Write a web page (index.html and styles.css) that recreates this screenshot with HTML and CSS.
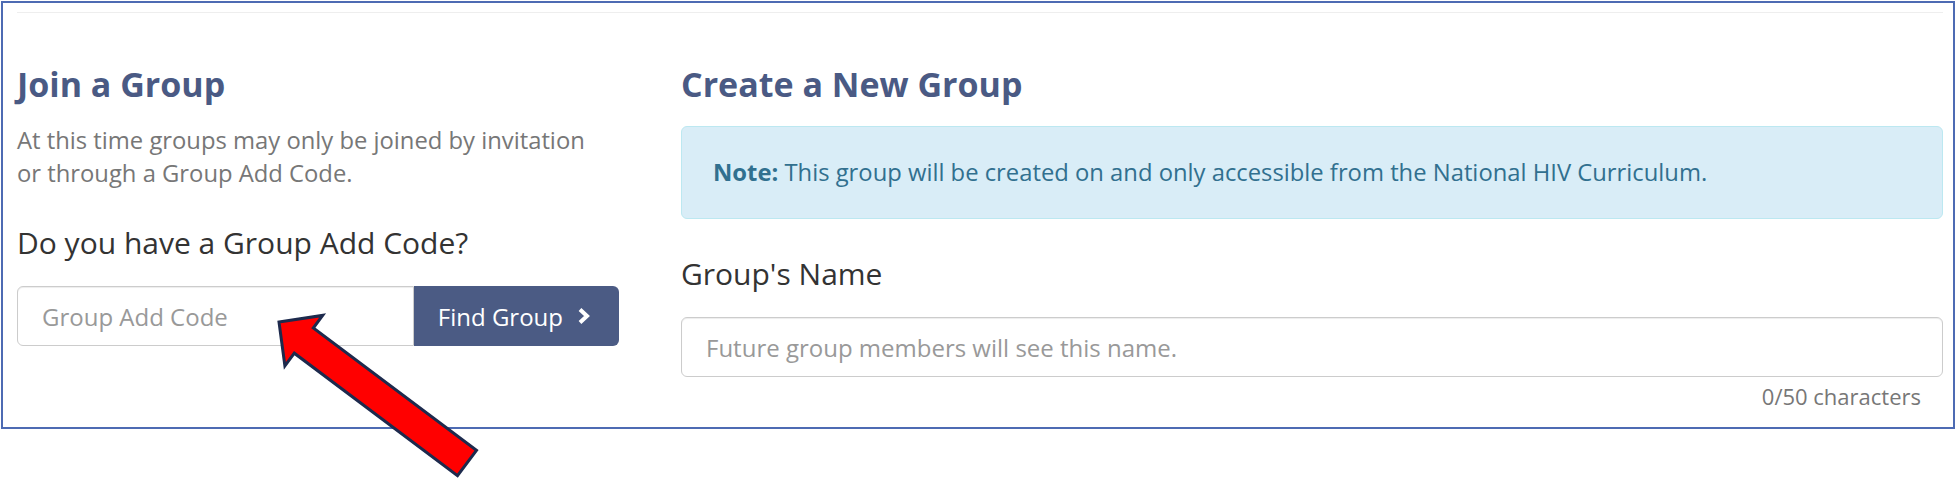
FILE: index.html
```html
<!DOCTYPE html>
<html lang="en">
<head>
    <meta charset="UTF-8">
    <meta name="viewport" content="width=device-width, initial-scale=1.0">
    <title>Groups</title>
    <link rel="stylesheet" href="styles.css">
</head>
<body>
    <div class="frame">
        <div class="row">
            <section class="join">
                <h2 class="title">Join a Group</h2>
                <p class="lead">At this time groups may only be joined by invitation or through a Group Add Code.</p>
                <label class="field-label" for="addCode">Do you have a Group Add Code?</label>
                <div class="input-group">
                    <input type="text" id="addCode" class="text-input" placeholder="Group Add Code">
                    <button type="button" class="find-btn">Find Group
                        <svg class="chevron" viewBox="0 0 14 18" width="14" height="18"><path d="M3 2.5 L10 9 L3 15.5" fill="none" stroke="#fff" stroke-width="4"/></svg>
                    </button>
                </div>
            </section>
            <section class="create">
                <h2 class="title">Create a New Group</h2>
                <div class="alert"><strong>Note:</strong> This group will be created on and only accessible from the National HIV Curriculum.</div>
                <label class="field-label" for="groupName">Group's Name</label>
                <input type="text" id="groupName" class="text-input wide" placeholder="Future group members will see this name.">
                <div class="counter">0/50 characters</div>
            </section>
        </div>
    </div>

    <svg class="arrow" viewBox="0 0 215 173" width="215" height="173">
        <polygon points="9,17 52.7,10.4 43.3,23 206.5,145.4 187.5,170.6 24.3,48.2 14.9,60.8" fill="#ff0000" stroke="#1d2a4d" stroke-width="3" stroke-linejoin="miter"/>
    </svg>
</body>
</html>
```

FILE: styles.css
```css
body {
    margin: 0;
    font-family: "Open Sans", "Liberation Sans", sans-serif;
    background: #fff;
    color: #333;
    position: relative;
    height: 478px;
    overflow: hidden;
}
.frame {
    margin: 1px 3px 0 1px;
    border: 2px solid #4d6bb3;
    padding: 0 10px 14px 14px;
}
.row {
    display: grid;
    grid-template-columns: 602px 1fr;
    column-gap: 62px;
    margin-top: 9px;
    border-top: 1px solid #eee;
}
.title {
    margin: 51px 0 0;
    font-size: 34px;
    line-height: 40px;
    font-weight: 700;
    color: #4a5a84;
}
.lead {
    margin: 20px 0 0;
    max-width: 585px;
    font-size: 23.8px;
    line-height: 33px;
    color: #777;
}
.field-label {
    display: block;
    margin-top: 35px;
    font-size: 30px;
    line-height: 36px;
    color: #333;
}
.create .field-label {
    margin-top: 37px;
}
.input-group {
    display: flex;
    margin-top: 25px;
    height: 60px;
}
.text-input {
    box-sizing: border-box;
    height: 60px;
    flex: 1;
    min-width: 0;
    margin: 0;
    padding: 0 24px;
    border: 1px solid #ccc;
    border-radius: 6px 0 0 6px;
    font-family: inherit;
    font-size: 24px;
    color: #555;
    box-shadow: inset 0 1px 1px rgba(0, 0, 0, 0.075);
}
.text-input::placeholder {
    color: #999;
}
.text-input.wide {
    display: block;
    width: 100%;
    margin-top: 25px;
    border-radius: 6px;
}
.find-btn {
    display: flex;
    align-items: center;
    gap: 14px;
    height: 60px;
    padding: 0 28px 0 24px;
    border: none;
    border-radius: 0 6px 6px 0;
    background: #4b5b84;
    color: #fff;
    font-family: inherit;
    font-size: 24px;
    cursor: pointer;
}
.chevron {
    display: block;
}
.alert {
    margin-top: 22px;
    padding: 29px 31px 29px;
    border: 1px solid #bce8f1;
    border-radius: 6px;
    background: #d9edf7;
    color: #31708f;
    font-size: 23.8px;
    line-height: 33px;
}
.counter {
    margin-top: 3px;
    padding-right: 22px;
    text-align: right;
    font-size: 22px;
    line-height: 33px;
    color: #777;
}
.arrow {
    position: absolute;
    left: 270px;
    top: 305px;
}
```
